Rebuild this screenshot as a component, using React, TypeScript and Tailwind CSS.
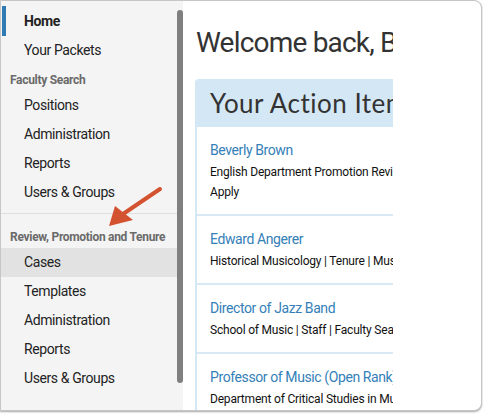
import React from "react";

const font = { fontFamily: "Roboto, 'Liberation Sans', sans-serif" };

function NavItem({ label, bold, active, selected }: { label: string; bold?: boolean; active?: boolean; selected?: boolean }) {
  return (
    <div className={`relative h-[29px] flex items-center pl-[23px] text-[14px] tracking-[-0.4px] text-[#222] ${bold ? "font-bold" : ""} ${selected ? "bg-[#e2e2e2]" : ""}`}>
      {active && <div className="absolute left-[1px] top-[-1px] bottom-0 w-[4px] bg-[#2f7ab3]" />}
      {label}
    </div>
  );
}

function Item({ title, lines }: { title: string; lines: string[] }) {
  return (
    <div className="pl-[13px] pt-[13px] pb-[12px] border-b-2 border-[#d8e9f5] whitespace-nowrap">
      <div className="text-[14px] tracking-[-0.4px] leading-[20px] text-[#3580b8]">{title}</div>
      <div className="mt-[2px]">
        {lines.map((l) => (
          <div key={l} className="text-[12px] leading-[20px] tracking-[-0.2px] text-[#111]">{l}</div>
        ))}
      </div>
    </div>
  );
}

export default function App() {
  return (
    <div className="w-[483px] h-[414px] bg-white relative" style={font}>
      <div className="w-[482px] h-[411px] border border-[#c6c6c6] rounded-r-[8px] overflow-hidden flex shadow-[0_1px_2px_rgba(0,0,0,0.35)] bg-white">
        <div className="w-[182px] shrink-0 bg-[#f4f4f4] relative pt-[6px]">
          <NavItem label="Home" bold active />
          <NavItem label="Your Packets" />
          <div className="h-[26px] pt-[8px] pl-[9px] text-[12px] leading-[14px] font-bold tracking-[-0.3px] text-[#6a6a6a]">Faculty Search</div>
          <NavItem label="Positions" />
          <NavItem label="Administration" />
          <NavItem label="Reports" />
          <NavItem label="Users & Groups" />
          <div className="mt-[6px] h-px bg-[#e0e0e0]" />
          <div className="pt-[16px] pb-[4px] pl-[9px] text-[12px] leading-[14px] font-bold tracking-[-0.3px] text-[#6a6a6a] whitespace-nowrap">Review, Promotion and Tenure</div>
          <NavItem label="Cases" selected />
          <NavItem label="Templates" />
          <NavItem label="Administration" />
          <NavItem label="Reports" />
          <NavItem label="Users & Groups" />
          <div className="absolute right-[0px] top-[9px] w-[6px] h-[373px] rounded-full bg-[#7f7f7f]" />
        </div>
        <div className="w-[210px] shrink-0 pl-[13px] pt-[26px] overflow-hidden">
          <div className="text-[28px] leading-[32px] tracking-[-0.8px] text-[#333] whitespace-nowrap">Welcome back, Bob</div>
          <div className="mt-[20px] -ml-[1px] w-[199px] overflow-hidden rounded-tl-[4px]">
            <div className="h-[48px] bg-[#d4e7f4] pl-[15px] text-[26px] leading-[48px] tracking-[0.5px] text-[#333] whitespace-nowrap" style={{ fontFamily: "Lato, 'Open Sans', sans-serif" }}>
              Your Action Items
            </div>
            <div className="border-l-2 border-[#d4e7f4]">
              <Item title="Beverly Brown" lines={["English Department Promotion Review", "Apply"]} />
              <Item title="Edward Angerer" lines={["Historical Musicology | Tenure | Music"]} />
              <Item title="Director of Jazz Band" lines={["School of Music | Staff | Faculty Search"]} />
              <Item title="Professor of Music (Open Rank)" lines={["Department of Critical Studies in Music"]} />
            </div>
          </div>
        </div>
        <div className="flex-1" />
      </div>
      <svg className="absolute left-0 top-0" width="483" height="414" viewBox="0 0 483 414">
        <line x1="160" y1="189" x2="123" y2="214" stroke="#d35230" strokeWidth="4" strokeLinecap="round" />
        <polygon points="109,226 115,206 133,220" fill="#d35230" />
      </svg>
    </div>
  );
}
